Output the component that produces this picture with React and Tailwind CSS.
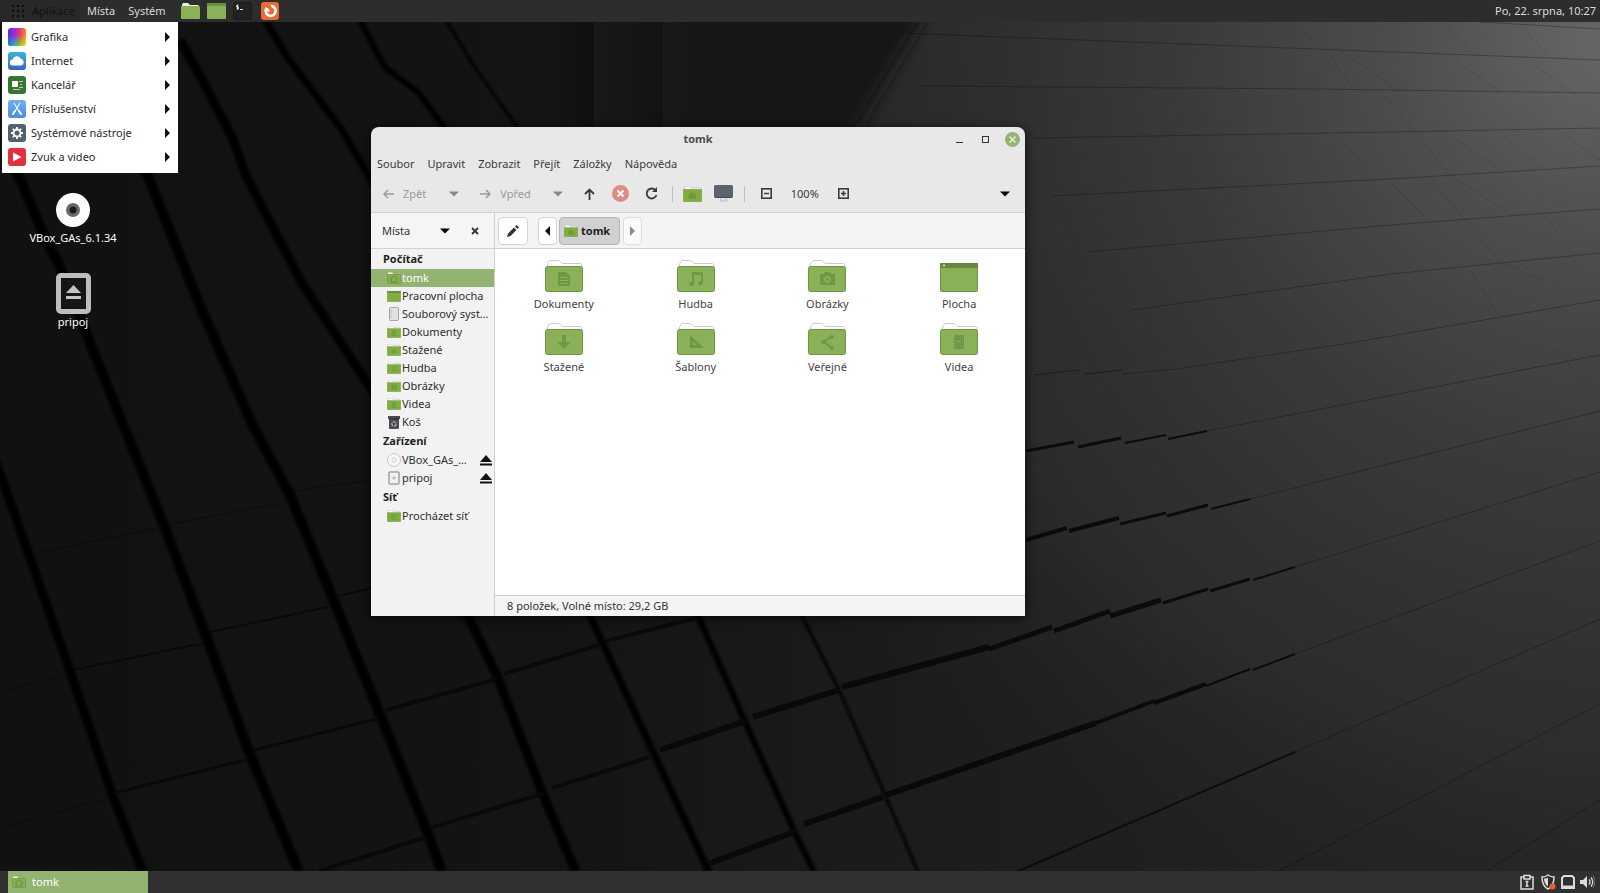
import React, { useState } from 'react';

const appMenu = [
  { id: 'graphics', label: 'Grafika' },
  { id: 'internet', label: 'Internet' },
  { id: 'office', label: 'Kancelář' },
  { id: 'accessories', label: 'Příslušenství' },
  { id: 'system', label: 'Systémové nástroje' },
  { id: 'media', label: 'Zvuk a video' },
];

const windowMenu = ['Soubor', 'Upravit', 'Zobrazit', 'Přejít', 'Záložky', 'Nápověda'];

const places = [
  {
    title: 'Počítač',
    items: [
      { label: 'tomk', icon: 'home' },
      { label: 'Pracovní plocha', icon: 'desktop' },
      { label: 'Souborový syst…', icon: 'drive' },
      { label: 'Dokumenty', icon: 'documents' },
      { label: 'Stažené', icon: 'downloads' },
      { label: 'Hudba', icon: 'music' },
      { label: 'Obrázky', icon: 'pictures' },
      { label: 'Videa', icon: 'videos' },
      { label: 'Koš', icon: 'trash' },
    ],
  },
  {
    title: 'Zařízení',
    items: [
      { label: 'VBox_GAs_…', icon: 'disc', eject: true },
      { label: 'pripoj', icon: 'volume', eject: true },
    ],
  },
  {
    title: 'Síť',
    items: [{ label: 'Procházet síť', icon: 'network' }],
  },
];

const files = [
  { label: 'Dokumenty', icon: 'documents' },
  { label: 'Hudba', icon: 'music' },
  { label: 'Obrázky', icon: 'pictures' },
  { label: 'Plocha', icon: 'desktop' },
  { label: 'Stažené', icon: 'downloads' },
  { label: 'Šablony', icon: 'templates' },
  { label: 'Veřejné', icon: 'public' },
  { label: 'Videa', icon: 'videos' },
];

// Wide grooves between the tiles, left part of the wallpaper
const grooves = [
  { d: 'M-4 462L29 555L69 668L112 794L143 872', w: 9 },
  { d: 'M14 165L46 240L58 262L93 350L163 523L206 636L249 752L299 872', w: 10 },
  { d: 'M70 22L130 150L147 174L201 308L252 424L290 495L334 601L379 712L427 831L442 872', w: 10 },
  { d: 'M180 40L192 62L198 72L232 137L246 176L303 285L372 390L468 616L497 676L542 792L576 872', w: 9 },
  { d: 'M265 20L289 60L294 66L342 130L400 230L590 616L654 754L709 872', w: 7 },
  { d: 'M360 20L382 62L388 70L418 92L446 130L698 616L743 717L794 831L814 872', w: 6 },
  { d: 'M446 20L474 66L478 72L518 128', w: 3 },
  { d: 'M802 616L839 690L886 797L918 872', w: 3 },
];

const joints = [
  { d: 'M32 554L166 526M172 524L287 502M293 491L372 480', w: 1, o: 0.6 },
  { d: 'M0 692L60 676M0 828L112 797', w: 1, o: 0.5 },
  { d: 'M73 670L204 643M210 632L328 607M338 596L372 588', w: 2, o: 0.8 },
  { d: 'M115 793L249 759M255 750L376 719', w: 3, o: 0.8 },
  { d: 'M386 710L497 679M504 674L599 645M606 641L700 617', w: 4, o: 0.85 },
  { d: 'M319 871L427 837M430 828L545 793M552 788L650 757', w: 4, o: 0.85 },
  { d: 'M660 750L746 721M753 717L839 690M842 687L989 647', w: 6, o: 0.9 },
  { d: 'M989 649L1052 627M1054 631L1110 611M1110 616L1161 600', w: 5, o: 0.9 },
  { d: 'M1163 603L1208 589M1210 591L1250 579', w: 3, o: 0.9 },
  { d: 'M1253 580L1295 567', w: 2, o: 0.9 },
  { d: 'M708 864L797 831M804 824L883 797M886 795L1096 723', w: 6, o: 0.9 },
  { d: 'M1096 723L1154 701M1154 703L1206 684', w: 4, o: 0.9 },
  { d: 'M1206 686L1250 669M1253 670L1295 654', w: 2, o: 0.9 },
  { d: 'M1026 540L1067 528M1069 531L1119 518', w: 4, o: 0.9 },
  { d: 'M1120 524L1166 513M1167 516L1208 505', w: 3, o: 0.9 },
  { d: 'M1211 509L1250 499', w: 2, o: 0.9 },
  { d: 'M1026 451L1074 442M1078 447L1121 438', w: 3, o: 0.9 },
  { d: 'M1125 443L1166 435M1168 439L1207 431', w: 2, o: 0.9 },
  { d: 'M1016 872L1295 752', w: 2, o: 0.8 },
  { d: 'M1034 375L1079 370M1085 374L1122 370', w: 1, o: 0.5 },
];

const hairlines = [
  'M1295 567L1600 472', 'M1295 654L1600 541', 'M1250 499L1600 411', 'M1207 431L1600 355',
  'M1122 374L1177 369L1350 343L1600 300', 'M1295 752L1600 619', 'M1277 872L1600 704',
  'M1485 872L1600 800', 'M1132 310L1391 274L1600 253', 'M1087 252L1391 225L1600 209',
  'M1052 196L1391 179L1600 166', 'M1034 138L1391 132L1600 128', 'M920 86L1318 89L1600 93',
  'M900 33L1288 48L1600 60', 'M1480 22L1600 29',
];

const seams = [
  'M1302 31L1325 48L1352 88', 'M1380 90L1450 175L1512 215', 'M1430 178L1500 262L1543 280',
  'M1445 132L1500 170', 'M1340 50L1400 92', 'M1455 60L1500 92', 'M1530 62L1575 95',
  'M1470 270L1500 317', 'M1545 215L1575 255', 'M1500 132L1540 168', 'M1560 132L1600 160',
  'M1550 345L1590 385', 'M1520 262L1560 300', 'M1370 22L1400 50', 'M1440 22L1475 55',
  'M1390 182L1430 222', 'M1340 140L1380 178', 'M1520 25L1550 58',
];

function Wallpaper() {
  return (
    <svg className="absolute inset-0 h-full w-full" viewBox="0 0 1600 893" preserveAspectRatio="xMidYMid slice" aria-hidden="true">
      <defs>
        <linearGradient id="floor" x1="0" y1="0" x2="1" y2="0">
          <stop offset="0" stopColor="#111111" />
          <stop offset="0.35" stopColor="#141414" />
          <stop offset="0.6" stopColor="#1d1d1d" />
          <stop offset="1" stopColor="#252525" />
        </linearGradient>
        <radialGradient id="glow" gradientUnits="userSpaceOnUse" cx="1600" cy="40" r="950">
          <stop offset="0" stopColor="#666666" />
          <stop offset="0.2" stopColor="#515151" stopOpacity="0.95" />
          <stop offset="0.45" stopColor="#404040" stopOpacity="0.8" />
          <stop offset="0.75" stopColor="#343434" stopOpacity="0.55" />
          <stop offset="1" stopColor="#222222" stopOpacity="0" />
        </radialGradient>
        <linearGradient id="shade" gradientUnits="userSpaceOnUse" x1="560" y1="0" x2="700" y2="0">
          <stop offset="0" stopColor="#161616" stopOpacity="0" />
          <stop offset="1" stopColor="#161616" />
        </linearGradient>
        <filter id="soft" x="-5%" y="-5%" width="110%" height="110%">
          <feGaussianBlur stdDeviation="1.8" />
        </filter>
        <filter id="softer" x="-20%" y="-20%" width="140%" height="140%">
          <feGaussianBlur stdDeviation="8" />
        </filter>
      </defs>
      <rect width="1600" height="893" fill="url(#floor)" />
      <rect width="1600" height="893" fill="url(#glow)" />
      <path d="M400 -60H970L850 140L740 420H400Z" fill="url(#shade)" filter="url(#softer)" />
      <g fill="none" stroke="#050505" strokeLinejoin="round" filter="url(#soft)">
        {grooves.map(g => (
          <path key={g.d} d={g.d} strokeWidth={g.w} />
        ))}
      </g>
      <g fill="none" stroke="#080808">
        {joints.map(j => (
          <path key={j.d} d={j.d} strokeWidth={j.w} opacity={j.o} />
        ))}
      </g>
      <g fill="none" stroke="#000" strokeWidth="1" opacity="0.28">
        {hairlines.map(d => <path key={d} d={d} />)}
      </g>
      <g fill="none" stroke="#000" strokeWidth="1" opacity="0.1">
        {seams.map(d => <path key={d} d={d} />)}
      </g>
    </svg>
  );
}

function Emblem({ name }) {
  switch (name) {
    case 'documents':
      return <path d="M13 12h8l4 4v10H13zM15 17v1h8v-1zm0 3v1h8v-1zm0 3v1h8v-1z" fillRule="evenodd" />;
    case 'music':
      return <path d="M15 12h11v11a2.500 2 0 1 1-2-2v-6h-7v9a2.500 2 0 1 1-2-2z" />;
    case 'pictures':
      return <path d="M12 14h4l1-2h5l1 2h4v11H12zM19.500 16a3.500 3.500 0 1 0 .01 0zM19.500 18a1.500 1.500 0 1 1-.01 0z" fillRule="evenodd" />;
    case 'downloads':
      return <path d="M17 12h4v7h5l-7 7-7-7h5z" />;
    case 'templates':
      return <path d="M13 12l14 13H13zM16 19v3h4z" fillRule="evenodd" />;
    case 'public':
      return (
        <>
          <path d="M24 13l-8 6 8 6" fill="none" stroke="currentColor" strokeWidth="2" />
          <circle cx="24" cy="14" r="2" /><circle cx="15" cy="19" r="2" /><circle cx="24" cy="25" r="2" />
        </>
      );
    case 'videos':
      return <path d="M14 12h10v14H14zM15 14v1h1v-1zm0 3v1h1v-1zm0 3v1h1v-1zm0 3v1h1v-1zM22 14v1h1v-1zm0 3v1h1v-1zm0 3v1h1v-1zm0 3v1h1v-1zM17 18v1h4v-1z" fillRule="evenodd" />;
    case 'network':
      return <path d="M19 12a7 7 0 1 0 .01 0zM19 15a4 4 0 1 1-.01 0z" fillRule="evenodd" />;
    case 'home':
      return <path d="M19 11l9 7h-2v8H12v-8h-2z" />;
    default:
      return null;
  }
}

function FolderIcon({ name, className, small }) {
  if (name === 'desktop') {
    return (
      <svg className={className} viewBox="0 0 38 32" preserveAspectRatio="none" aria-hidden="true">
        <rect x="0.500" y="3.500" width="37" height="28" rx="1" fill={small ? '#7fae3f' : '#8ab158'} stroke="#6f9446" />
        <path d="M0 4q0-1 1-1h36q1 0 1 1v4H0z" fill="#67863f" />
        <circle cx="4" cy="5.500" r="1" fill="#e4efd6" />
      </svg>
    );
  }
  return (
    <svg className={className} viewBox="0 0 38 32" preserveAspectRatio="none" aria-hidden="true">
      <path d="M2.500 10V4L5 .5h9l3 3h18.500L37 5v5z" fill="#fff" stroke="#c9ccd2" strokeWidth={small ? 2 : 1} />
      <rect x="0.500" y="6.500" width="37" height="25" rx="2" fill={small ? '#7fae3f' : '#8ab158'} stroke="#6f9446" />
      <g fill="#6f9747" color="#6f9747"><Emblem name={name} /></g>
    </svg>
  );
}

function PlaceIcon({ name, selected }) {
  if (name === 'drive') {
    return (
      <svg className="h-3.5 w-3.5 shrink-0" viewBox="0 0 14 14" aria-hidden="true">
        <rect x="2.500" y="0.500" width="9" height="13" rx="1" fill="#e2e2e2" stroke="#a5a5a5" />
        <path d="M4 2v10" stroke="#c4c4c4" />
      </svg>
    );
  }
  if (name === 'trash') {
    return (
      <svg className="h-3.5 w-3.5 shrink-0" viewBox="0 0 14 14" aria-hidden="true">
        <path d="M1 1h12v3H1zM2 4h10v9a1 1 0 0 1-1 1H3a1 1 0 0 1-1-1z" fill="#4a4d52" />
        <path d="M2 4h10" stroke="#26282b" />
        <circle cx="7" cy="9" r="2.200" fill="none" stroke="#d7d7d7" strokeDasharray="3 1" />
      </svg>
    );
  }
  if (name === 'disc') {
    return (
      <svg className="h-3.5 w-3.5 shrink-0" viewBox="0 0 14 14" aria-hidden="true">
        <circle cx="7" cy="7" r="6.500" fill="#f7f7f7" stroke="#c6c6c6" />
        <circle cx="7" cy="7" r="2" fill="#fff" stroke="#cfcfcf" />
      </svg>
    );
  }
  if (name === 'volume') {
    return (
      <svg className="h-3.5 w-3.5 shrink-0" viewBox="0 0 14 14" aria-hidden="true">
        <rect x="2" y="1" width="10" height="12" rx="1" fill="#f2f2f2" stroke="#a3a3a3" strokeWidth="1.500" />
        <path d="M7 5v4M5 7h4" stroke="#b5b5b5" />
      </svg>
    );
  }
  if (selected) {
    return <TaskFolderIcon />;
  }
  return <FolderIcon name={name} small className="h-3 w-3.5 shrink-0" />;
}

function TaskFolderIcon() {
  return (
    <svg className="h-3 w-3.5 shrink-0" viewBox="0 0 14 12" aria-hidden="true">
      <path d="M1 2V.500h4L6.500 2H13v1H1z" fill="#f3f8ec" />
      <rect x="0.500" y="2.500" width="13" height="9" rx="1" fill="#86b04f" stroke="#74a043" />
      <path d="M7 4l3.500 2.500H10V10H4V6.500h-.500z" fill="none" stroke="#66903c" />
    </svg>
  );
}

function AppIcon({ id }) {
  return (
    <svg className="h-[18px] w-[18px] shrink-0" viewBox="0 0 18 18" aria-hidden="true">
      <defs>
        <linearGradient id="hueTop" x1="0" y1="0" x2="1" y2="0">
          <stop offset="0" stopColor="#4a30e8" /><stop offset="0.400" stopColor="#a828d0" />
          <stop offset="0.700" stopColor="#f04060" /><stop offset="1" stopColor="#ff8a20" />
        </linearGradient>
        <linearGradient id="hueBottom" x1="0" y1="0" x2="1" y2="0">
          <stop offset="0" stopColor="#2878f0" /><stop offset="0.350" stopColor="#20c0b0" />
          <stop offset="0.600" stopColor="#60d830" /><stop offset="1" stopColor="#f0e820" />
        </linearGradient>
        <linearGradient id="hueFade" x1="0" y1="0" x2="0" y2="1">
          <stop offset="0.350" stopColor="#000" /><stop offset="1" stopColor="#fff" />
        </linearGradient>
        <mask id="hueMask"><rect width="18" height="18" fill="url(#hueFade)" /></mask>
        <linearGradient id="sky" x1="0" y1="0" x2="0" y2="1">
          <stop offset="0" stopColor="#38b6d8" /><stop offset="1" stopColor="#3a62cc" />
        </linearGradient>
        <linearGradient id="blue" x1="0" y1="0" x2="0" y2="1">
          <stop offset="0" stopColor="#6fb2f2" /><stop offset="1" stopColor="#4a8be0" />
        </linearGradient>
      </defs>
      {id === 'graphics' && (
        <>
          <rect width="18" height="18" rx="3" fill="url(#hueTop)" />
          <rect width="18" height="18" rx="3" fill="url(#hueBottom)" mask="url(#hueMask)" />
        </>
      )}
      {id === 'internet' && (
        <>
          <rect width="18" height="18" rx="3" fill="url(#sky)" />
          <path d="M5 13.500a3 3 0 0 1-.500-6 4.500 4.500 0 0 1 8.300-.800 3.500 3.500 0 0 1 .400 6.800z" fill="#fff" />
        </>
      )}
      {id === 'office' && (
        <>
          <rect width="18" height="18" rx="3" fill="#36752f" />
          <path d="M4 5h6v6H4z" fill="#fff" />
          <path d="M11 5.500h4M12 8.500h2M11 11.500h4M5 13.500h7" stroke="#b9d3ae" />
        </>
      )}
      {id === 'accessories' && (
        <>
          <rect width="18" height="18" rx="3" fill="url(#blue)" />
          <path d="M6 3l5.500 9M12 3L6.500 12" stroke="#e8f2ff" strokeWidth="1.300" />
          <path d="M11 11l2 3M7 11l-2 3" stroke="#fff" strokeWidth="2" strokeLinecap="round" />
        </>
      )}
      {id === 'system' && (
        <>
          <rect width="18" height="18" rx="3" fill="#52626c" />
          <circle cx="9" cy="9" r="3.500" fill="none" stroke="#fff" strokeWidth="1.800" />
          <path d="M9 3v2M9 13v2M3 9h2M13 9h2M4.800 4.800l1.400 1.400M11.800 11.800l1.400 1.400M4.800 13.200l1.400-1.400M11.800 6.200l1.400-1.400" stroke="#fff" strokeWidth="1.800" />
        </>
      )}
      {id === 'media' && (
        <>
          <rect width="18" height="18" rx="3" fill="#e2303c" />
          <path d="M5 4.500v9l8.500-4.500z" fill="#fff" />
        </>
      )}
    </svg>
  );
}

function Caret({ className }) {
  return (
    <svg className={className} viewBox="0 0 10 6" width="10" height="6" fill="currentColor" aria-hidden="true">
      <path d="M0 0.500h10L5 5.500z" />
    </svg>
  );
}

function TopPanel() {
  return (
    <header className="relative z-10 flex h-[22px] items-center bg-[#2d2d2d] text-[#dadada]">
      <nav className="flex h-full items-center">
        <button className="flex h-full w-20 items-center gap-2 bg-[#282828] pl-3 text-[#101010]">
          <svg width="12" height="12" viewBox="0 0 12 12" fill="#0c0c0c" aria-hidden="true">
            {[0, 5, 10].map(y => [0, 5, 10].map(x => <rect key={`${x}-${y}`} x={x} y={y} width="2" height="2" />))}
          </svg>
          Aplikace
        </button>
        <button className="h-full px-[7px]">Místa</button>
        <button className="h-full px-[6px]">Systém</button>
      </nav>
      <div className="flex items-center gap-[7px] pl-[9px]">
        <button aria-label="Soubory">
          <svg className="block" width="19" height="16" viewBox="0 0 19 16">
            <path d="M1 6V2l1-2h5l2 2h8l1 1v3z" fill="#eef0ea" />
            <rect y="3" width="19" height="13" rx="1" fill="#8ab158" />
          </svg>
        </button>
        <button aria-label="Zobrazit plochu">
          <svg className="block" width="19" height="16" viewBox="0 0 19 16">
            <rect width="19" height="16" rx="1" fill="#8ab158" />
            <path d="M0 0h19v3H0z" fill="#6b9040" />
          </svg>
        </button>
        <button aria-label="Terminál">
          <svg className="block" width="19" height="18" viewBox="0 0 19 18">
            <rect x="0.500" y="0.500" width="18" height="17" rx="2" fill="#222" stroke="#1a1a1a" />
            <path d="M5.500 3.500h-2v1.500h2V7h-2M4.500 2.500v5M7 7.500h3" fill="none" stroke="#d8d8d8" />
          </svg>
        </button>
        <button aria-label="Firefox" className="pl-0.5">
          <svg className="block" width="18" height="18" viewBox="0 0 18 18">
            <rect width="18" height="18" rx="3" fill="#ea6a35" />
            <path d="M5 7A5 5 0 1 0 11 4" fill="none" stroke="#fff" strokeWidth="2.600" />
            <path d="M4 5l3.500 1.500L9 10 5 9zM9 2.500l4 1 1 4-3-2z" fill="#fff" />
          </svg>
        </button>
      </div>
      <time className="ml-auto pr-1">Po, 22. srpna, 10:27</time>
    </header>
  );
}

function AppMenu() {
  return (
    <ul className="absolute left-0.5 top-0 w-44 bg-white pb-1 pt-[3px]">
      {appMenu.map(item => (
        <li key={item.id}>
          <button className="flex h-6 w-full items-center gap-[5px] pl-[6px] pr-2 text-left text-[#2b2b2b]">
            <AppIcon id={item.id} />
            <span className="flex-1">{item.label}</span>
            <svg width="5" height="10" viewBox="0 0 5 10" fill="#111" aria-hidden="true"><path d="M0 0l5 5-5 5z" /></svg>
          </button>
        </li>
      ))}
    </ul>
  );
}

function DesktopIcons() {
  return (
    <div className="relative flex w-[146px] flex-col items-center gap-[27px] pt-[171px] text-white">
      <button className="flex flex-col items-center gap-[3px]">
        <svg width="34" height="34" viewBox="0 0 34 34" aria-hidden="true">
          <circle cx="17" cy="17" r="17" fill="#fdfdfd" />
          <circle cx="17" cy="17" r="7" fill="#6a6a6a" />
          <circle cx="17" cy="17" r="3.500" fill="#1c1c1c" />
        </svg>
        VBox_GAs_6.1.34
      </button>
      <button className="flex flex-col items-center">
        <svg width="35" height="41" viewBox="0 0 35 41" aria-hidden="true">
          <rect x="2.500" y="2.500" width="30" height="36" rx="2.500" fill="#161616" stroke="#bdbdbd" strokeWidth="5" />
          <path d="M17.500 12L25 20H10zM10 23h15v3H10z" fill="#c4c4c4" />
        </svg>
        pripoj
      </button>
    </div>
  );
}

function TitleBar() {
  return (
    <div className="grid h-6 grid-cols-3 items-center">
      <span />
      <h1 className="text-center font-bold text-[#4c4c4c]">tomk</h1>
      <div className="flex items-center justify-end gap-[14px] pr-[5px] text-[#333]">
        <button aria-label="Minimalizovat">
          <svg className="block" width="12" height="15" viewBox="0 0 12 15"><path d="M3 10.500h7" stroke="currentColor" /></svg>
        </button>
        <button aria-label="Maximalizovat">
          <svg className="block" width="12" height="15" viewBox="0 0 12 15"><rect x="3.500" y="4.500" width="6" height="6" fill="none" stroke="currentColor" /></svg>
        </button>
        <button aria-label="Zavřít">
          <svg className="block" width="15" height="15" viewBox="0 0 15 15">
            <circle cx="7.500" cy="7.500" r="7.500" fill="#92b372" />
            <path d="M4.500 4.500l6 6M10.500 4.500l-6 6" stroke="#e6f0dc" strokeWidth="1.500" />
          </svg>
        </button>
      </div>
    </div>
  );
}

function Toolbar() {
  const [zoom, setZoom] = useState(100);

  return (
    <div className="flex h-[38px] items-center border-b border-[#d2d2d2] pl-3 text-[#3a3a3a]">
      <button disabled className="flex items-center gap-[9px] text-[#999]">
        <svg width="11" height="10" viewBox="0 0 11 10" fill="none" stroke="currentColor" strokeWidth="1.500"><path d="M11 5H1M5 1L1 5l4 4" /></svg>
        Zpět
      </button>
      <button disabled aria-label="Historie zpět" className="ml-[23px] text-[#888]"><Caret /></button>
      <button disabled className="ml-[21px] flex items-center gap-[9px] text-[#999]">
        <svg width="11" height="10" viewBox="0 0 11 10" fill="none" stroke="currentColor" strokeWidth="1.500"><path d="M0 5h10M6 1l4 4-4 4" /></svg>
        Vpřed
      </button>
      <button disabled aria-label="Historie vpřed" className="ml-[22px] text-[#888]"><Caret /></button>
      <button aria-label="Nahoru" className="ml-[21px]">
        <svg width="11" height="12" viewBox="0 0 11 12" fill="none" stroke="currentColor" strokeWidth="1.800"><path d="M5.500 12V1.500M1 6l4.500-4.500L10 6" /></svg>
      </button>
      <button aria-label="Zastavit" className="ml-[17px]">
        <svg width="17" height="17" viewBox="0 0 17 17">
          <circle cx="8.500" cy="8.500" r="8.500" fill="#df8a86" />
          <path d="M5.500 5.500l6 6M11.500 5.500l-6 6" stroke="#fff" strokeWidth="2" />
        </svg>
      </button>
      <button aria-label="Obnovit" className="ml-4">
        <svg width="13" height="13" viewBox="0 0 13 13" fill="none" stroke="currentColor" strokeWidth="1.800">
          <path d="M10.500 3.200A5 5 0 1 0 11.500 8" />
          <path d="M12 0v5H7z" fill="currentColor" stroke="none" />
        </svg>
      </button>
      <span className="ml-[14px] h-4 w-px bg-[#bfbfbf]" />
      <button aria-label="Domů" className="ml-[10px]"><FolderIcon name="home" small className="block h-4 w-[19px]" /></button>
      <button aria-label="Počítač" className="ml-3">
        <svg width="19" height="17" viewBox="0 0 19 17">
          <path d="M7 12h5l1 4H6z" fill="#dfe3ea" stroke="#b6bcc8" />
          <rect width="19" height="13" rx="1.500" fill="#5c636e" />
          <path d="M1 12.500h17" stroke="#444b57" />
        </svg>
      </button>
      <span className="ml-[11px] h-4 w-px bg-[#bfbfbf]" />
      <button aria-label="Zmenšit" className="ml-4" onClick={() => setZoom(z => Math.max(z - 25, 25))}>
        <svg width="11" height="11" viewBox="0 0 11 11" fill="none" stroke="currentColor" strokeWidth="1.600"><rect x="0.800" y="0.800" width="9.400" height="9.400" /><path d="M3 5.500h5" /></svg>
      </button>
      <output className="w-[66px] text-center">{zoom}%</output>
      <button aria-label="Zvětšit" onClick={() => setZoom(z => Math.min(z + 25, 400))}>
        <svg width="11" height="11" viewBox="0 0 11 11" fill="none" stroke="currentColor" strokeWidth="1.600"><rect x="0.800" y="0.800" width="9.400" height="9.400" /><path d="M3 5.500h5M5.500 3v5" /></svg>
      </button>
      <button aria-label="Zobrazení" className="ml-auto mr-[15px] text-black"><Caret /></button>
    </div>
  );
}

function Sidebar() {
  const [active, setActive] = useState('tomk');

  return (
    <aside className="flex w-[124px] shrink-0 flex-col border-r border-[#cfcfcf] bg-[#f2f2f2]">
      <div className="flex h-9 items-center border-b border-[#d2d2d2] bg-[#f5f5f5] pl-[11px] text-[#333]">
        Místa
        <button aria-label="Vybrat panel" className="ml-auto text-black"><Caret /></button>
        <button aria-label="Zavřít panel" className="ml-[21px] mr-[15px]">
          <svg width="8" height="8" viewBox="0 0 8 8" stroke="#333" strokeWidth="1.800"><path d="M1 1l6 6M7 1L1 7" /></svg>
        </button>
      </div>
      {places.map(group => (
        <section key={group.title}>
          <h2 className="pl-3 font-bold leading-5 text-[#1f1f1f]">{group.title}</h2>
          <ul>
            {group.items.map(item => (
              <li
                key={item.label}
                className={`flex h-[18px] items-center pl-4 pr-0.5 ${active === item.label ? 'bg-[#92b372] text-white' : 'text-[#2f2f2f]'}`}
              >
                <button onClick={() => setActive(item.label)} className="flex flex-1 items-center gap-px whitespace-nowrap text-left">
                  <PlaceIcon name={item.icon} selected={active === item.label} />
                  {item.label}
                </button>
                {item.eject && (
                  <button aria-label={`Vysunout ${item.label}`}>
                    <svg className="block" width="12" height="11" viewBox="0 0 12 11" fill="#111"><path d="M6 0l6 7H0zM0 8.500h12v2H0z" /></svg>
                  </button>
                )}
              </li>
            ))}
          </ul>
        </section>
      ))}
    </aside>
  );
}

function PathBar() {
  return (
    <div className="flex h-9 items-center border-b border-[#d2d2d2] bg-[#f4f4f4] pl-[3px]">
      <button aria-label="Upravit umístění" className="flex h-7 w-[30px] items-center justify-center rounded-sm border border-[#d4d4d4] bg-white">
        <svg width="12" height="12" viewBox="0 0 12 12" fill="#333"><path d="M0 12l1-3.500L7 2.500 9.500 5l-6 6zM8 1.500L9.500 0 12 2.500 10.500 4z" /></svg>
      </button>
      <button aria-label="Předchozí složka" className="ml-[10px] flex h-7 w-[19px] items-center justify-center rounded-sm border border-[#d4d4d4] bg-white">
        <svg width="5" height="10" viewBox="0 0 5 10" fill="#111"><path d="M5 0v10L0 5z" /></svg>
      </button>
      <button className="ml-0.5 flex h-7 w-[61px] items-center gap-[3px] rounded-sm border border-[#b4b4b4] bg-[#d0d0d0] pl-1 font-bold text-[#222]">
        <FolderIcon name="home" small className="h-3 w-3.5" />
        tomk
      </button>
      <button disabled aria-label="Další složka" className="ml-[3px] flex h-7 w-[19px] items-center justify-center rounded-sm border border-[#dcdcdc] bg-[#fafafa]">
        <svg width="5" height="10" viewBox="0 0 5 10" fill="#8a8a8a"><path d="M0 0v10l5-5z" /></svg>
      </button>
    </div>
  );
}

function FileWindow() {
  return (
    <main className="absolute left-[371px] top-[105px] flex h-[489px] w-[654px] flex-col overflow-hidden rounded-t-lg bg-[#e8e8e8] shadow-[0_2px_12px_rgba(0,0,0,0.7)]">
      <TitleBar />
      <nav className="flex h-6 items-center gap-[13px] pl-[6px] pt-0.5 text-[#3a3a3a]">
        {windowMenu.map(label => (
          <button key={label}>{label}</button>
        ))}
      </nav>
      <Toolbar />
      <div className="flex min-h-0 flex-1">
        <Sidebar />
        <section className="flex min-w-0 flex-1 flex-col bg-white">
          <PathBar />
          <ul className="grid flex-1 grid-cols-4 content-start gap-y-3 pl-[3px] pt-[11px] text-[#3f4246]">
            {files.map(file => (
              <li key={file.label} className="flex justify-center">
                <button className="flex flex-col items-center gap-[5px]">
                  <FolderIcon name={file.icon} className="h-8 w-[38px]" />
                  <span className="leading-[14px]">{file.label}</span>
                </button>
              </li>
            ))}
          </ul>
          <footer className="flex h-[21px] items-center border-t border-[#d2d2d2] bg-[#f4f4f4] pl-3 text-[#333]">
            8 položek, Volné místo: 29,2 GB
          </footer>
        </section>
      </div>
    </main>
  );
}

function BottomPanel() {
  return (
    <footer className="relative flex h-[22px] items-center justify-between bg-[#303030] text-white">
      <button className="ml-2 flex h-full w-[140px] items-center gap-[6px] bg-[#92b372] pl-1">
        <TaskFolderIcon />
        tomk
      </button>
      <div className="flex items-center gap-[5px] pr-[5px] text-[#dcdcdc]">
        <button aria-label="Schránka">
          <svg className="block" width="16" height="16" viewBox="0 0 16 16" fill="none" stroke="currentColor" strokeWidth="1.500">
            <path d="M5 3H2v12h12V3h-3M5 1.500h6V5H5zM8 7v5M6.500 7.500h3M6.500 12h3" />
          </svg>
        </button>
        <button aria-label="Aktualizace">
          <svg className="block" width="16" height="16" viewBox="0 0 16 16">
            <path d="M8 1c2 1.500 4 2 6 2 0 6-2 10-6 12C4 13 2 9 2 3c2 0 4-.500 6-2z" fill="#2d2d2d" stroke="currentColor" strokeWidth="1.500" />
            <path d="M8 3.500v9C5.500 11 4 8 4 4.500c1.500 0 3-.300 4-1z" fill="currentColor" />
            <circle cx="12.500" cy="12.500" r="3" fill="#e8622c" />
          </svg>
        </button>
        <button aria-label="Síť">
          <svg className="block" width="14" height="14" viewBox="0 0 14 14" fill="none" stroke="currentColor" strokeWidth="2">
            <path d="M1 3l2-2h8l2 2v10H1z" /><path d="M1 12h12" strokeWidth="3" />
          </svg>
        </button>
        <button aria-label="Hlasitost">
          <svg className="block" width="15" height="14" viewBox="0 0 15 14">
            <path d="M0 5h3l4-4v12L3 9H0z" fill="currentColor" />
            <path d="M9 4.500q2 2.500 0 5M11 2.500q3.500 4.500 0 9" fill="none" stroke="currentColor" strokeWidth="1.300" />
            <path d="M13 1q4 6 0 12" fill="none" stroke="#777" />
          </svg>
        </button>
      </div>
    </footer>
  );
}

export default function App() {
  return (
    <div className="relative flex min-h-screen flex-col overflow-hidden bg-[#121212] font-['Noto_Sans','Open_Sans',sans-serif] text-[11px] leading-4">
      <Wallpaper />
      <TopPanel />
      <div className="relative flex-1">
        <DesktopIcons />
        <AppMenu />
        <FileWindow />
      </div>
      <BottomPanel />
    </div>
  );
}
